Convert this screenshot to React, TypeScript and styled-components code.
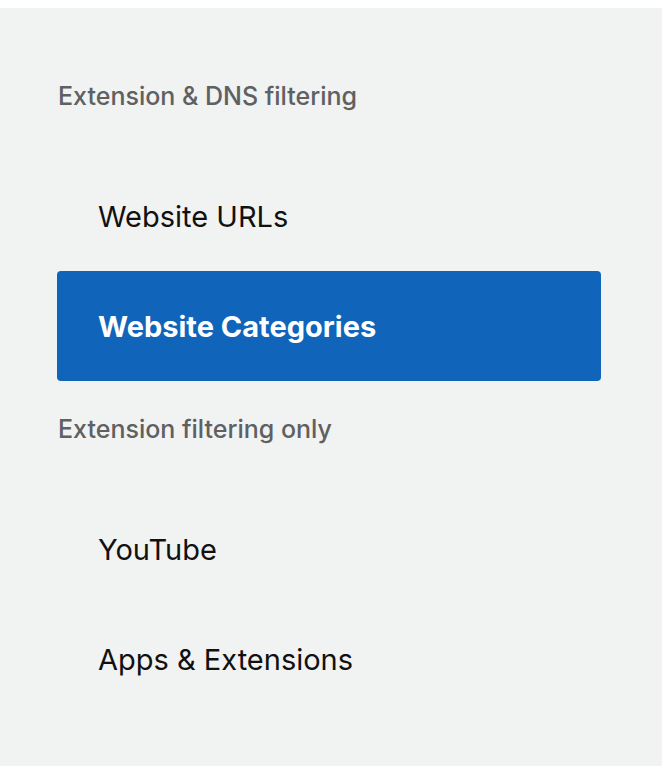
import styled, { createGlobalStyle } from 'styled-components';

const GlobalStyle = createGlobalStyle`
  html, body {
    margin: 0;
    padding: 0;
    background: #ffffff;
  }
  body {
    font-family: Inter, 'Noto Sans', 'Liberation Sans', sans-serif;
  }
`;

const Page = styled.div`
  padding: 8px 6px 14px 0;
`;

const Panel = styled.nav`
  background-color: #f1f2f2;
  padding: 73px 61px 52px 57px;
  display: flex;
  flex-direction: column;
`;

const SectionTitle = styled.h3<{ first?: boolean }>`
  margin: ${(p) => (p.first ? '0' : '33px')} 0 50px 1px;
  height: 30px;
  line-height: 30px;
  font-size: 25px;
  font-weight: 500;
  color: #5e6061;
`;

const Item = styled.a<{ active?: boolean }>`
  display: flex;
  align-items: center;
  height: 110px;
  padding-left: 41px;
  border-radius: 4px;
  font-size: 29px;
  text-decoration: none;
  font-weight: ${(p) => (p.active ? 700 : 400)};
  color: ${(p) => (p.active ? '#ffffff' : '#111111')};
  background-color: ${(p) => (p.active ? '#1064b9' : 'transparent')};
`;

const sections = [
  {
    title: 'Extension & DNS filtering',
    items: ['Website URLs', 'Website Categories'],
  },
  {
    title: 'Extension filtering only',
    items: ['YouTube', 'Apps & Extensions'],
  },
];

export default function App() {
  const active = 'Website Categories';
  return (
    <>
      <GlobalStyle />
      <Page>
        <Panel>
          {sections.map((section, i) => (
            <div key={section.title}>
              <SectionTitle first={i === 0}>{section.title}</SectionTitle>
              {section.items.map((item) => (
                <Item key={item} href="#" active={item === active}>
                  {item}
                </Item>
              ))}
            </div>
          ))}
        </Panel>
      </Page>
    </>
  );
}
